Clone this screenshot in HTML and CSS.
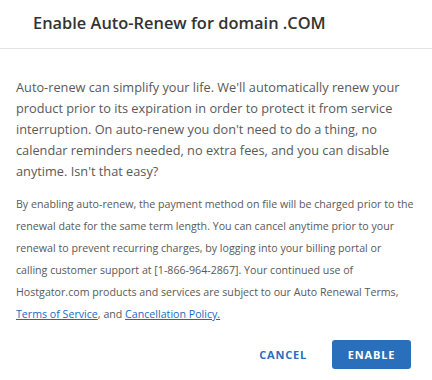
FILE: index.html
```html
<!DOCTYPE html>
<html lang="en">
<head>
  <meta charset="UTF-8" />
  <meta name="viewport" content="width=device-width, initial-scale=1.0"/>
  <title>Enable Auto-Renew</title>
  <link rel="stylesheet" href="styles.css">
</head>
<body>

  <div class="modal">
    <!-- Header -->
    <div class="modal-header">
      <h2>Enable Auto-Renew for domain .COM</h2>
    </div>

    <!-- Body -->
    <div class="modal-body">
      <p class="lead">Auto-renew can simplify your life. We'll automatically renew your product prior to its expiration in order to protect it from service interruption. On auto-renew you don't need to do a thing, no calendar reminders needed, no extra fees, and you can disable anytime. Isn't that easy?</p>
      <p class="terms">By enabling auto-renew, the payment method on file will be charged prior to the renewal date for the same term length. You can cancel anytime prior to your renewal to prevent recurring charges, by logging into your billing portal or <span class="nowrap">calling customer support at [1-866-964-2867].</span> Your continued use of <span class="nowrap">Hostgator.com products and services are subject to our Auto Renewal Terms,</span> <a href="#">Terms of Service</a>, and <a href="#">Cancellation Policy.</a></p>
    </div>

    <!-- Footer -->
    <div class="modal-footer">
      <button class="btn btn-link">Cancel</button>
      <button class="btn btn-primary">Enable</button>
    </div>
  </div>

</body>
</html>
```

FILE: styles.css
```css
body {
  margin: 0;
  background: #fff;
  font-family: "Open Sans", Arial, sans-serif;
  color: #333;
}
.modal {
  width: 432px;
  height: 380px;
  background: #fff;
}
/* ---------- Header ---------- */
.modal-header {
  padding: 11px 33px 14px;
  border-bottom: 1px solid #e3e3e3;
}
.modal-header h2 {
  margin: 0;
  font-size: 16.4px;
  line-height: 23px;
  font-weight: 600;
  color: #333;
}
/* ---------- Body ---------- */
.modal-body {
  padding: 28px 14px 0 16px;
}
.lead {
  margin: 0 0 11px;
  font-size: 12.75px;
  line-height: 21px;
  color: #595959;
}
.terms {
  margin: 0;
  font-size: 10.65px;
  line-height: 22px;
  color: #595959;
}
.terms .nowrap { white-space: nowrap; }
.terms a {
  color: #1a6ac4;
  text-decoration: underline;
}
/* ---------- Footer ---------- */
.modal-footer {
  display: flex;
  justify-content: flex-end;
  gap: 8px;
  padding: 15px 21px 0 0;
}
.btn {
  height: 29px;
  padding: 0 17px;
  border: none;
  border-radius: 3px;
  font-family: "Open Sans", Arial, sans-serif;
  font-size: 11px;
  font-weight: 700;
  letter-spacing: 0.8px;
  text-transform: uppercase;
  cursor: pointer;
}
.btn-link {
  background: transparent;
  color: #2a6fbb;
}
.btn-primary {
  width: 79px;
  padding: 0;
  background: #2a6fbb;
  color: #fff;
}
```
